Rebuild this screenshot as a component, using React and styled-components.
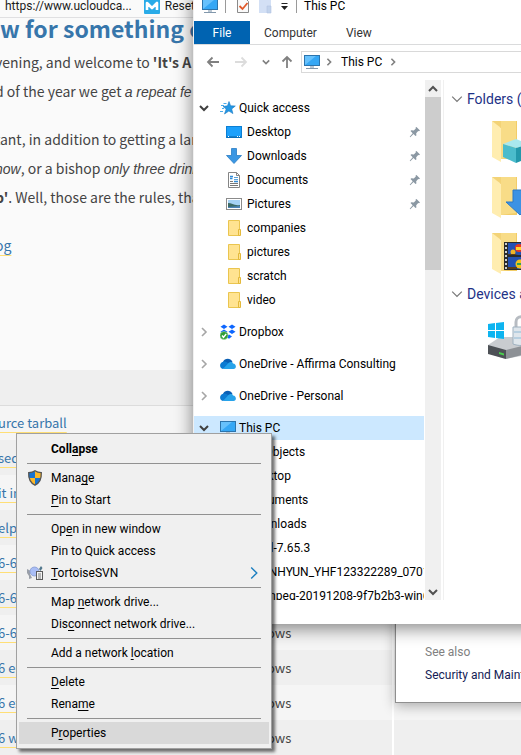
import React from "react";
import styled, { createGlobalStyle } from "styled-components";

const UI = `Roboto, "Noto Sans", sans-serif`;
const READ = `"Noto Sans CJK JP", "Noto Sans", sans-serif`;

const Global = createGlobalStyle`
  * { box-sizing: border-box; }
  html, body { margin: 0; padding: 0; overflow: hidden; background: #fafafa; }
  button { font: inherit; color: inherit; background: none; border: 0; padding: 0; margin: 0; text-align: left; }
  svg { display: block; flex: none; }
  ul { list-style: none; margin: 0; padding: 0; }
  u { text-underline-offset: 2px; text-decoration-skip-ink: none; }
`;

/* ---------- desktop and web page ---------- */
const Desktop = styled.div`
  position: relative;
  min-height: 100vh;
  overflow: hidden;
  font: 12px/16px ${UI};
  color: #000;
`;
const BookmarkBar = styled.nav`
  display: flex;
  align-items: center;
  gap: 12px;
  height: 18px;
  padding: 0 5px 6px;
  border-bottom: 1px solid #e0e0e2;
  white-space: nowrap;
`;
const Bookmark = styled.a`
  display: flex;
  align-items: center;
  gap: 5px;
  color: #1a1a1a;
  text-decoration: none;
`;
const Article = styled.main`
  margin-left: -5px;
  font: 14px/29px ${READ};
  color: #444;
  white-space: nowrap;
`;
const Title = styled.h1`
  margin: 0 0 10px 5px;
  font-size: 23px;
  line-height: 20px;
  font-weight: 700;
  color: #3776ab;
`;
const Para = styled.p`
  margin: 0 0 19px;
  em { font: italic 14px/1 "Liberation Sans", sans-serif; }
`;
const TextLink = styled.a`
  color: #3776ab;
  text-decoration: underline;
  text-decoration-color: #ffdf76;
  text-decoration-thickness: 1px;
  text-underline-offset: 4px;
  text-decoration-skip-ink: none;
`;
const Files = styled.table`
  width: 100%;
  margin-top: 110px;
  border-collapse: collapse;
  font-size: 13px;
  line-height: 18px;
  th { height: 35px; background: #efefef; border-bottom: 1px solid #dcdcdc; }
  td { height: 35px; padding: 0 0 0 3px; background: #f5f5f5; }
  tr:nth-child(even) td { background: #efefef; }
  td:nth-child(2) { width: 174px; padding-left: 17px; border-right: 2px solid #fff; }
  td:nth-child(1) { width: 224px; }
`;

/* ---------- windows ---------- */
const BackWindow = styled.aside`
  position: absolute;
  left: 395px;
  right: -80px;
  top: 560px;
  padding: 83px 0 19px 29px;
  background: #fff;
  border: 1px solid #8f8f8f;
  box-shadow: 0 3px 12px rgba(0, 0, 0, 0.3);
  display: flex;
  flex-direction: column;
  gap: 7px;
  white-space: nowrap;
`;
const Muted = styled.span`
  color: #808080;
`;
const PlainLink = styled.a`
  color: #151c55;
  text-decoration: none;
`;
const Explorer = styled.section`
  position: absolute;
  left: 193px;
  right: -60px;
  top: -9px;
  padding-bottom: 24px;
  background: #fff;
  border-left: 1px solid #f0f0f0;
  box-shadow: 0 4px 16px 1px rgba(0, 0, 0, 0.45);
  white-space: nowrap;
`;
const TitleBar = styled.header`
  display: flex;
  align-items: center;
  height: 30px;
  padding-left: 8px;
  gap: 7px;
`;
const Divider = styled.i`
  width: 1px;
  height: 14px;
  background: #9a9a9a;
`;
const QuickTools = styled.div`
  display: flex;
  align-items: center;
  gap: 8px;
  padding-left: 3px;
`;
const Ribbon = styled.div`
  display: flex;
  height: 24px;
  border-bottom: 1px solid #dadbdc;
`;
const RibbonTab = styled.button`
  padding: 0 14px;
  min-width: 56px;
  text-align: center;
  color: ${(p) => (p.$file ? "#fff" : "#333")};
  background: ${(p) => (p.$file ? "#0063b1" : "none")};
`;
const NavRow = styled.div`
  display: flex;
  align-items: center;
  padding: 6px 0 7px 12px;
  gap: 14px;
`;
const NavButton = styled.button`
  margin-right: ${(p) => (p.$tight ? "-4px" : "0")};
`;
const Address = styled.div`
  flex: 1;
  display: flex;
  align-items: center;
  gap: 5px;
  height: 22px;
  padding-left: 2px;
  margin-left: -7px;
  border: 1px solid #d9d9d9;
`;
const Crumb = styled.button`
  padding: 0 2px 0 3px;
`;
const Body = styled.div`
  display: flex;
  height: 520px;
`;
const Tree = styled.ul`
  flex: none;
  width: 230px;
  padding-top: 16px;
  overflow: hidden;
`;
const TreeItem = styled.li`
  margin-bottom: ${(p) => (p.$gap ? "8px" : "0")};
`;
const TreeRow = styled.button`
  display: flex;
  align-items: center;
  width: 100%;
  height: 24px;
  padding: 0 3px 0 ${(p) => (p.$child ? "32px" : "5px")};
  gap: ${(p) => (p.$child ? "5px" : "3px")};
  background: ${(p) => (p.$selected ? "#cce8ff" : "none")};
`;
const ChevronSlot = styled.span`
  flex: none;
  width: 18px;
`;
const TreeLabel = styled.span`
  flex: 1;
`;
const ScrollBar = styled.div`
  flex: none;
  width: 16px;
  margin-left: 1px;
  background: #f0f0f0;
  display: flex;
  flex-direction: column;
  align-items: center;
`;
const ScrollArrow = styled.button`
  height: 17px;
  display: grid;
  place-items: center;
`;
const Thumb = styled.div`
  width: 100%;
  height: 173px;
  margin-bottom: auto;
  background: #cdcdcd;
`;
const Content = styled.div`
  flex: 1;
  min-width: 0;
  margin-left: 2px;
  border-left: 1px solid #f0f0f0;
  padding: 8px 0 0 7px;
`;
const Group = styled.h2`
  display: flex;
  align-items: center;
  gap: 4px;
  margin: 0;
  height: 22px;
  font-size: 14px;
  font-weight: 400;
  color: #1e3287;
`;
const Tiles = styled.div`
  display: flex;
  flex-direction: column;
  gap: 8px;
  padding: 8px 0 5px ${(p) => (p.$wide ? "36px" : "40px")};
`;

/* ---------- context menu ---------- */
const Menu = styled.div`
  position: absolute;
  left: 16px;
  top: 433px;
  width: 256px;
  padding: 4px 2px;
  background: #f0f0f0;
  border: 1px solid #a0a0a0;
  box-shadow: 3px 3px 3px rgba(0, 0, 0, 0.55);
`;
const MenuItem = styled.button`
  display: flex;
  align-items: center;
  width: 100%;
  height: 22px;
  padding: 0 8px;
  font-weight: ${(p) => (p.$strong ? 700 : 400)};
  background: ${(p) => (p.$active ? "#d9d9d9" : "none")};
`;
const MenuIcon = styled.span`
  width: 24px;
`;
const MenuText = styled.span`
  flex: 1;
`;
const Rule = styled.hr`
  margin: 3px 8px;
  border: 0;
  height: 1px;
  background: #919191;
`;

/* ---------- icons ---------- */
const Monitor = () => (
  <svg width="16" height="16" viewBox="0 0 16 16">
    <rect x="0.5" y="1.5" width="15" height="10" fill="#35a7f5" stroke="#2b74ad" />
    <path d="M1 11V2h11z" fill="#7cccff" opacity=".7" />
    <path d="M6 12h4v2H6z" fill="#b9c6d2" />
    <path d="M2 14.5h12" stroke="#8298ac" />
  </svg>
);
const Chevron = ({ dir = "right", color = "#a6a6a6", size = 10, w = 1.6 }) => {
  const d = { right: "M3 1l4 4-4 4", down: "M1 3l4 4 4-4", up: "M1 7l4-4 4 4" }[dir];
  return (
    <svg width={size} height={size} viewBox="0 0 10 10">
      <path d={d} fill="none" stroke={color} strokeWidth={w} />
    </svg>
  );
};
const Arrow = ({ dir, color }) => {
  const d = { left: "M13 7H2M6.500 2.500L2 7l4.500 4.500", right: "M1 7h11M7.500 2.500L12 7l-4.500 4.500", up: "M7 13V2M2.500 6.500L7 2l4.500 4.500" }[dir];
  return (
    <svg width="14" height="14" viewBox="0 0 14 14">
      <path d={d} fill="none" stroke={color} strokeWidth="1.8" />
    </svg>
  );
};
const CheckDoc = () => (
  <svg width="14" height="16" viewBox="0 0 14 16">
    <path d="M1.500 .5h8l3 3v11h-11z" fill="#fafafa" stroke="#8a8a8a" />
    <path d="M3.500 8l3 3 5-6" fill="none" stroke="#e0592a" strokeWidth="1.800" />
  </svg>
);
const PaleFolder = () => (
  <svg width="14" height="16" viewBox="0 0 14 16">
    <path d="M1 0h12v15H1z" fill="#d3e0f5" />
    <path d="M9 8h4v7H9z" fill="#c2d3ec" stroke="#b1c5e2" strokeWidth=".6" />
  </svg>
);
const Caret = () => (
  <svg width="9" height="9" viewBox="0 0 9 9">
    <path d="M1.500 1.500h6" stroke="#222" />
    <path d="M1 4h7L4.500 8z" fill="#222" />
  </svg>
);
const BookmarkLogo = () => (
  <svg width="16" height="16" viewBox="0 0 16 16">
    <rect width="16" height="16" rx="1" fill="#29abe8" />
    <path d="M3 12V5l5 5 5-5v7" fill="none" stroke="#fff" strokeWidth="2.600" strokeLinejoin="round" />
  </svg>
);
const Star = () => (
  <svg width="16" height="16" viewBox="0 0 16 16">
    <path d="M9 1.500l1.600 4.300 4.700.2-3.600 3 1.200 4.600-4-2.600-4.400 3 1.700-5L3 6.500l4.500-.7z" fill="#2497e3" stroke="#1878c4" strokeWidth=".6" />
    <path d="M3.500 3.500h3M1 5.500h3M2 8.500h2M0 11.500h3" stroke="#4aabea" strokeWidth="1" />
  </svg>
);
const DesktopIcon = () => (
  <svg width="16" height="16" viewBox="0 0 16 16">
    <rect x=".5" y="2.500" width="15" height="11" fill="#1ca0fb" stroke="#0c7fd3" />
    <path d="M1 13h14" stroke="#075f9f" />
    <path d="M2 12.500h1M11 12.500h1M13 12.500h1" stroke="#fff" />
  </svg>
);
const DownIcon = () => (
  <svg width="16" height="16" viewBox="0 0 16 16">
    <path d="M5.500.5h5v7h5L8 15.500.5 7.500h5z" fill="#3b97e3" stroke="#2a7cc4" strokeWidth=".8" />
  </svg>
);
const DocIcon = () => (
  <svg width="16" height="16" viewBox="0 0 16 16">
    <path d="M2.500.5h8l3 3v12h-11z" fill="#fff" stroke="#858585" />
    <path d="M10.500.5v3h3" fill="none" stroke="#858585" />
    <path d="M4 6.500h2.500M4 4.500h3" stroke="#2f8ad6" strokeWidth="1.500" />
    <path d="M8 5.500h4M8 7.500h4" stroke="#5ba4dc" />
    <path d="M4 9.500h3M4 11.500h8M4 13.500h8" stroke="#777" />
    <path d="M8 9.500h4" stroke="#2f8ad6" strokeWidth="1.500" />
  </svg>
);
const PicIcon = () => (
  <svg width="16" height="16" viewBox="0 0 16 16">
    <rect x=".5" y="2.500" width="15" height="11" fill="#fff" stroke="#8b8b8b" />
    <path d="M2 4h12v8H2z" fill="#a5d2f5" />
    <path d="M2 7c4 0 6 3 12 2v3H2z" fill="#3c6a66" />
    <path d="M2 11l12-1v2H2z" fill="#4b83b8" />
  </svg>
);
const FolderIcon = () => (
  <svg width="16" height="16" viewBox="0 0 16 16">
    <path d="M2.500.5h11v15h-11z" fill="#ffe391" stroke="#eac54f" />
    <path d="M12.500 9.500h2v6h-2z" fill="#ffe391" stroke="#e3b93b" />
  </svg>
);
const Pin = () => (
  <svg width="12" height="12" viewBox="0 0 12 12">
    <path d="M7.500 1l3.500 3.500-1 .8-.8-.3-2 2.200.2 2.300-.9.500L4.500 8 1.300 11.200l-.6-.5L3.700 7.300 1.500 5l.8-.8 2.500.2 2-2-.2-.8z" fill="#8b98a3" />
  </svg>
);
const DropboxIcon = () => (
  <svg width="16" height="16" viewBox="0 0 16 16">
    <path d="M4 .5l3.500 2.200L4 5 .5 2.700zM12 .5l3.500 2.200L12 5 8.500 2.700zM4 5.500l3.500 2.200L4 10 .5 7.700zM12 5.500l3.500 2.200L12 10 8.500 7.700zM9 10.500l3 2-3 2.300-3-2.300z" fill="#0d66ff" />
    <circle cx="4" cy="11.500" r="4" fill="#2e9e35" stroke="#a9d9a8" strokeWidth=".6" />
    <path d="M2 11.500l1.500 1.800L6.200 10" fill="none" stroke="#fff" strokeWidth="1.400" />
  </svg>
);
const CloudIcon = () => (
  <svg width="16" height="16" viewBox="0 0 16 16">
    <path d="M3 6c1.500-4 7.500-4.500 9.500 0L10 9z" fill="#0a5fb4" />
    <path d="M3.200 5.700C6 5 8 7 10 9l-7 4C-.8 12.500-1 6.500 3.200 5.700z" fill="#0c7bd2" />
    <path d="M8 7.500c1.500-2 4.500-2 5 0 3.500.2 4 5.300.5 5.500H3z" fill="#27a3ea" />
  </svg>
);
const Shield = () => (
  <svg width="16" height="16" viewBox="0 0 16 16">
    <path d="M8 .8c2 1.400 4 1.800 6.300 1.900.3 6-1.300 10-6.300 12.500C3 12.700 1.400 8.700 1.700 2.700 4 2.600 6 2.200 8 .8z" fill="#fdb827" />
    <path d="M8 1v7H2C1.600 6 1.700 4.500 1.700 2.700 4 2.600 6 2.200 8 1zM8 8h6c-.7 3.300-2.500 5.500-6 7z" fill="#1874d1" />
    <path d="M8 .8c2 1.400 4 1.800 6.300 1.900.3 6-1.300 10-6.300 12.500C3 12.700 1.400 8.700 1.700 2.700 4 2.600 6 2.200 8 .8z" fill="none" stroke="#555" strokeWidth="1.300" />
  </svg>
);
const Tortoise = () => (
  <svg width="16" height="16" viewBox="0 0 16 16">
    <path d="M0 4l4 2-1 3 2 4-3 1v-3L0 8z" fill="#9a9fa8" />
    <circle cx="7.500" cy="6.500" r="4.500" fill="#a9bdf5" stroke="#8599cf" strokeWidth=".8" />
    <path d="M12 4l2-3 1.500 2-2 3z" fill="#50768c" />
    <rect x="9.500" y="6.500" width="6" height="8" fill="#f4f4f4" stroke="#5b5b5b" />
    <path d="M11 9h3M11 11h3M11 13h3" stroke="#5b5b5b" strokeWidth=".8" />
  </svg>
);
const BigFolder = ({ children }) => (
  <svg width="48" height="48" viewBox="0 0 48 48">
    <path d="M9 3h17v38H10z" fill="#f2cd68" />
    <path d="M10 3h15v36l-15 2z" fill="#f8dc87" />
    <path d="M1 3h1l8 7v34L1 39z" fill="#ffedb0" />
    <path d="M1 3h9v7z" fill="#f3d377" />
    {children}
  </svg>
);
const Cube = () => (
  <BigFolder>
    <path d="M12 26l13-5 13 5-13 4z" fill="#a9e8ee" />
    <path d="M12 26l13 4v15l-13-6z" fill="#4bbccc" />
    <path d="M25 30l13-4v14l-13 5z" fill="#2398ab" />
  </BigFolder>
);
const BigDown = () => (
  <BigFolder>
    <path d="M22 16h14v11h7L29 41 15 28h7z" fill="#3c92e4" stroke="#2b79c6" />
  </BigFolder>
);
const Film = () => (
  <BigFolder>
    <path d="M13 12h34v28H13z" fill="#2b2b2b" />
    <path d="M17 13h30v12H17zM17 27h30v12H17z" fill="#2351b4" />
    <path d="M15 13v27" stroke="#cfcfcf" strokeWidth="2" strokeDasharray="2 2" />
    <circle cx="28" cy="18" r="4" fill="#e33a22" />
    <path d="M25 17h6v3h-6z" fill="#ffd530" />
    <circle cx="22" cy="22" r="2.500" fill="#f0b429" />
    <circle cx="29" cy="34" r="4.500" fill="#f4c21f" />
    <path d="M26 33h6v2h-6z" fill="#35a355" />
    <path d="M17 24h7l3 1H17zM17 37h9v2h-9z" fill="#5a3d1c" />
  </BigFolder>
);
const Drive = () => (
  <svg width="52" height="48" viewBox="0 0 52 48">
    <path d="M1 32l12-8h36v16L18 46 1 40z" fill="#c9ccd0" />
    <path d="M1 32l18 5v9L1 41z" fill="#4d5156" />
    <path d="M19 37l32-8v9l-32 8z" fill="#8d9196" />
    <path d="M12 39l5 1.500v2L12 41z" fill="#48d24c" />
    <path d="M1 11l7-1v7H1zM9 10l8-1v8H9zM1 18h7v7l-7-1zM9 18h8v8l-8-1z" fill="#0db4f0" />
    <path d="M29 17V9c0-7 10-7 10 0v8" fill="none" stroke="#b7bcc2" strokeWidth="3" />
    <path d="M26 14h17v17c-5 2-12 2-17 0z" fill="#dfe6ec" stroke="#9fb1c0" />
    <path d="M27 19h16M27 25h16" stroke="#8fb8d4" />
  </svg>
);

/* ---------- data ---------- */
const quick = [
  ["Desktop", DesktopIcon, true],
  ["Downloads", DownIcon, true],
  ["Documents", DocIcon, true],
  ["Pictures", PicIcon, true],
  ["companies", FolderIcon],
  ["pictures", FolderIcon],
  ["scratch", FolderIcon],
  ["video", FolderIcon],
];
const pcItems = [
  ["3D Objects", FolderIcon],
  ["Desktop", DesktopIcon],
  ["Documents", DocIcon],
  ["Downloads", DownIcon],
  ["ncurl-7.65.3", FolderIcon],
  ["JEONHYUN_YHF123322289_0701", FolderIcon],
  ["n-ffmpeg-20191208-9f7b2b3-win64", FolderIcon],
];
const files = [
  ["urce tarball", ""],
  ["sed source", ""],
  ["it installer", ""],
  ["elp file", "Windows"],
  ["6-64 embeddable", "Windows"],
  ["6-64 executable", "Windows"],
  ["6-64 web-based", "Windows"],
  ["6 embeddable", "Windows"],
  ["6 executable", "Windows"],
  ["6 web-based", "Windows"],
];

const Root = ({ label, icon: Icon, open, selected }) => (
  <TreeRow $selected={selected}>
    <ChevronSlot>
      <Chevron dir={open ? "down" : "right"} color={open ? "#404040" : "#a6a6a6"} w={open ? 2 : 1.6} />
    </ChevronSlot>
    <Icon />
    <TreeLabel>{label}</TreeLabel>
  </TreeRow>
);
const Children = ({ items }) => (
  <ul>
    {items.map(([label, Icon, pinned]) => (
      <li key={label}>
        <TreeRow $child>
          <Icon />
          <TreeLabel>{label}</TreeLabel>
          {pinned && <Pin />}
        </TreeRow>
      </li>
    ))}
  </ul>
);
const Item = ({ icon, children, more, ...rest }) => (
  <MenuItem role="menuitem" {...rest}>
    <MenuIcon>{icon}</MenuIcon>
    <MenuText>{children}</MenuText>
    {more && <Chevron color="#1c7fc0" size={14} w={1} />}
  </MenuItem>
);

export default function App() {
  return (
    <Desktop>
      <Global />
      <BookmarkBar>
        <Bookmark href="#ucloud">https://www.ucloudca...</Bookmark>
        <Bookmark href="#reset"><BookmarkLogo />Reset</Bookmark>
      </BookmarkBar>
      <Article>
        <Title>w for something c</Title>
        <Para>
          vening, and welcome to <b>'It's A L</b><br />
          d of the year we get <em>a repeat fe</em>
        </Para>
        <Para>
          tant, in addition to getting a larg<br />
          <em>now</em>, or a bishop <em>only three drink</em><br />
          <b>p'</b>. Well, those are the rules, tha
        </Para>
        <TextLink href="#blog">og</TextLink>
        <Files>
          <thead><tr><th colSpan={3} /></tr></thead>
          <tbody>
            {files.map(([name, os]) => (
              <tr key={name}>
                <td><TextLink href="#file">{name}</TextLink></td>
                <td>{os}</td>
                <td />
              </tr>
            ))}
          </tbody>
        </Files>
      </Article>

      <BackWindow>
        <Muted>See also</Muted>
        <PlainLink href="#security">Security and Maintenance</PlainLink>
      </BackWindow>

      <Explorer>
        <TitleBar>
          <Monitor />
          <Divider />
          <QuickTools><CheckDoc /><PaleFolder /><Caret /></QuickTools>
          <Divider />
          <span>This PC</span>
        </TitleBar>
        <Ribbon>
          <RibbonTab $file>File</RibbonTab>
          <RibbonTab>Computer</RibbonTab>
          <RibbonTab>View</RibbonTab>
        </Ribbon>
        <NavRow>
          <NavButton aria-label="Back"><Arrow dir="left" color="#808080" /></NavButton>
          <NavButton aria-label="Forward"><Arrow dir="right" color="#dcdcdc" /></NavButton>
          <NavButton $tight aria-label="Recent"><Chevron dir="down" color="#808080" size={8} w={2} /></NavButton>
          <NavButton aria-label="Up"><Arrow dir="up" color="#808080" /></NavButton>
          <Address>
            <Monitor />
            <Chevron color="#808080" size={8} w={2} />
            <Crumb>This PC</Crumb>
            <Chevron color="#808080" size={8} w={2} />
          </Address>
        </NavRow>
        <Body>
          <Tree>
            <TreeItem><Root label="Quick access" icon={Star} open /></TreeItem>
            <TreeItem $gap><Children items={quick} /></TreeItem>
            <TreeItem $gap><Root label="Dropbox" icon={DropboxIcon} /></TreeItem>
            <TreeItem $gap><Root label="OneDrive - Affirma Consulting" icon={CloudIcon} /></TreeItem>
            <TreeItem $gap><Root label="OneDrive - Personal" icon={CloudIcon} /></TreeItem>
            <TreeItem><Root label="This PC" icon={Monitor} open selected /></TreeItem>
            <TreeItem><Children items={pcItems} /></TreeItem>
          </Tree>
          <ScrollBar>
            <ScrollArrow aria-label="Scroll up"><Chevron dir="up" color="#505050" w={2} /></ScrollArrow>
            <Thumb />
            <ScrollArrow aria-label="Scroll down"><Chevron dir="down" color="#505050" w={2} /></ScrollArrow>
          </ScrollBar>
          <Content>
            <Group><Chevron dir="down" color="#777" size={12} w={1} />Folders (7)</Group>
            <Tiles><Cube /><BigDown /><Film /></Tiles>
            <Group><Chevron dir="down" color="#777" size={12} w={1} />Devices and drives (1)</Group>
            <Tiles $wide><Drive /></Tiles>
          </Content>
        </Body>
      </Explorer>

      <Menu role="menu">
        <Item $strong>Coll<u>a</u>pse</Item>
        <Rule />
        <Item icon={<Shield />}>Mana<u>g</u>e</Item>
        <Item><u>P</u>in to Start</Item>
        <Rule />
        <Item>Op<u>e</u>n in new window</Item>
        <Item>Pin to Quick access</Item>
        <Item icon={<Tortoise />} more><u>T</u>ortoiseSVN</Item>
        <Rule />
        <Item>Map <u>n</u>etwork drive...</Item>
        <Item>Dis<u>c</u>onnect network drive...</Item>
        <Rule />
        <Item>Add a network <u>l</u>ocation</Item>
        <Rule />
        <Item><u>D</u>elete</Item>
        <Item>Rena<u>m</u>e</Item>
        <Rule />
        <Item $active>P<u>r</u>operties</Item>
      </Menu>
    </Desktop>
  );
}
